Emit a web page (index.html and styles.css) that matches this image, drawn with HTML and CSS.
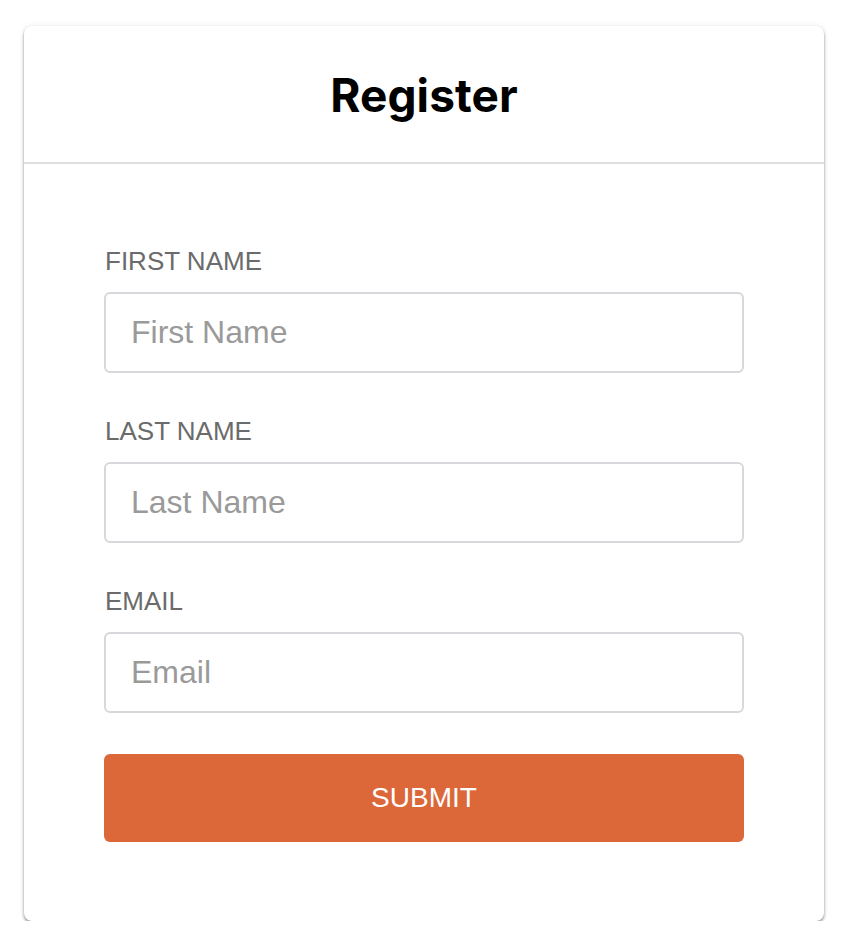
FILE: index.html
```html
<!DOCTYPE html>
<html lang="en">
<head>
<meta charset="utf-8">
<title>Register</title>
<link rel="stylesheet" href="styles.css">
</head>
<body>
  <div class="card">
    <div class="card-header">
      <h1 class="title">Register</h1>
    </div>
    <form class="card-body">
      <div class="field">
        <label class="label" for="first">First Name</label>
        <input class="input" id="first" type="text" placeholder="First Name">
      </div>
      <div class="field">
        <label class="label" for="last">Last Name</label>
        <input class="input" id="last" type="text" placeholder="Last Name">
      </div>
      <div class="field">
        <label class="label" for="email">Email</label>
        <input class="input" id="email" type="text" placeholder="Email">
      </div>
      <button class="submit" type="button">Submit</button>
    </form>
  </div>
</body>
</html>
```
FILE: styles.css
```css
html, body {
  margin: 0;
  padding: 0;
  background: #ffffff;
}
body {
  padding: 26px 28px 0 24px;
  font-family: "Liberation Sans", Arial, Helvetica, sans-serif;
}
.card {
  width: 800px;
  background: #fff;
  border-radius: 8px;
  box-shadow: 0 2px 3px rgba(0, 0, 0, 0.42), 0 0 6px rgba(0, 0, 0, 0.08);
}
.card-header {
  height: 136px;
  border-bottom: 2px solid #dedede;
  display: flex;
  align-items: center;
  justify-content: center;
}
.title {
  margin: 0;
  padding-top: 2px;
  font-family: Inter, "Liberation Sans", sans-serif;
  font-weight: 700;
  font-size: 46px;
  color: #000;
  letter-spacing: 0.1px;
}
.card-body {
  display: flex;
  flex-direction: column;
  padding: 80px 80px 79px 80px;
}
.field {
  display: flex;
  flex-direction: column;
  margin-bottom: 41px;
}
.label {
  font-size: 26px;
  line-height: 30px;
  padding-top: 2px;
  text-transform: uppercase;
  color: #6b6b6b;
  margin-bottom: 16px;
  margin-left: 1px;
}
.input {
  box-sizing: border-box;
  height: 81px;
  width: 640px;
  border: 2px solid #d6d8db;
  border-radius: 6px;
  padding: 0 25px;
  font-family: "Liberation Sans", Arial, sans-serif;
  font-size: 32px;
  color: #333;
  outline: none;
  background: #fff;
}
.input::placeholder {
  color: #9a9a9a;
}
.submit {
  height: 88px;
  width: 640px;
  border: none;
  border-radius: 6px;
  background: #dc6739;
  color: #fff;
  font-family: "Liberation Sans", Arial, sans-serif;
  font-size: 28px;
  text-transform: uppercase;
  cursor: pointer;
}
```
